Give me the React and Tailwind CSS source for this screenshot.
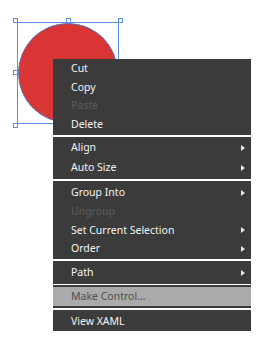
import React from "react";

const Arrow = () => (
  <span className="ml-auto mr-[6px] h-0 w-0 border-y-[3.5px] border-l-[4px] border-y-transparent border-l-[#e8e8e8]" />
);

const Item = ({ label, disabled, sub, h = "h-[18.5px]" }) => (
  <div
    className={`flex ${h} items-center pl-[18px] ${
      disabled ? "text-[#5e5e5e]" : "text-[#f4f4f4]"
    }`}
  >
    <span>{label}</span>
    {sub && <Arrow />}
  </div>
);

const Handle = ({ className }) => (
  <div
    className={`absolute h-[5px] w-[5px] border border-[#5b8ee6] bg-white ${className}`}
  />
);

export default function App() {
  return (
    <div
      className="relative h-[342px] w-[264px] overflow-hidden bg-white text-[10.5px]"
      style={{ fontFamily: '"Noto Sans", "Open Sans", sans-serif' }}
    >
      {/* selected ellipse on the canvas, with its adorner box */}
      <div className="absolute left-[17px] top-[22px] h-[102px] w-[102px] border border-[#5b8ee6]">
        <div className="h-full w-full rounded-full border border-[#5577c4] bg-[#d93535]" />
        <Handle className="-left-[5px] -top-[5px]" />
        <Handle className="left-[48px] -top-[5px]" />
        <Handle className="-right-[5px] -top-[5px]" />
        <Handle className="-left-[5px] top-[47px]" />
        <Handle className="-left-[5px] -bottom-[5px]" />
      </div>

      {/* context menu */}
      <div className="absolute left-[53px] top-[59px] flex w-[198px] flex-col">
        <div className="bg-[#3b3b3b] py-px">
          <Item label="Cut" />
          <Item label="Copy" />
          <Item label="Paste" disabled />
          <Item label="Delete" />
        </div>
        <div className="mt-[2px] bg-[#3b3b3b] py-px">
          <Item label="Align" sub h="h-[20px]" />
          <Item label="Auto Size" sub h="h-[20px]" />
        </div>
        <div className="mt-[2px] bg-[#3b3b3b] pb-[0.5px] pt-[2.5px]">
          <Item label="Group Into" sub h="h-[18.75px]" />
          <Item label="Ungroup" disabled h="h-[18.75px]" />
          <Item label="Set Current Selection" sub h="h-[18.75px]" />
          <Item label="Order" sub h="h-[18.75px]" />
        </div>
        <div className="mt-[2px] bg-[#3b3b3b]">
          <Item label="Path" sub h="h-[23px]" />
        </div>
        <div className="mt-px border-y-2 border-[#3b3b3b] bg-[#aaaaaa]">
          <div className="flex h-[19px] items-center pl-[18px] text-[#505050]">
            Make Control...
          </div>
        </div>
        <div className="mt-[2px] bg-[#3b3b3b] pt-[2px]">
          <Item label="View XAML" h="h-[19px]" />
        </div>
      </div>
    </div>
  );
}
